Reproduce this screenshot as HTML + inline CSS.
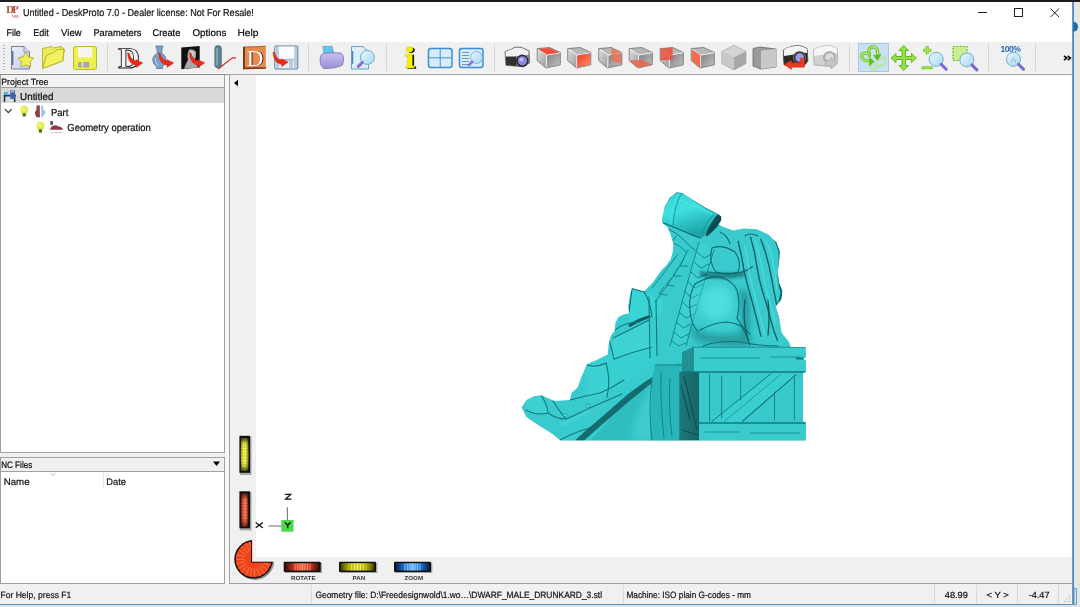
<!DOCTYPE html>
<html><head><meta charset="utf-8">
<style>
*{margin:0;padding:0;box-sizing:border-box}
html,body{width:1080px;height:607px;overflow:hidden;background:#f0f0f0;font-family:"Liberation Sans",sans-serif;color:#000;position:relative}
.a{position:absolute}
.t{position:absolute;white-space:pre}
svg{position:absolute;left:0;top:0;overflow:visible;will-change:transform}
</style></head><body>
<div class="a" style="left:0;top:0;width:1080px;height:2px;background:#1c1c1c"></div>
<div class="a" style="left:1074px;top:2px;width:6px;height:605px;background:#e6e8e6"></div>
<div class="a" style="left:1072px;top:2px;width:1px;height:605px;background:#6a9ac4"></div><div class="a" style="left:1073px;top:2px;width:1px;height:605px;background:#5a8ab4"></div>
<div class="a" style="left:0;top:2px;width:1072px;height:40px;background:#fff"></div>
<svg width="1080" height="607"><path d="M1073.5 21.7 A4.5 5 0 0 1 1073.5 31.7 Z" fill="#1a6ea6"/><rect x="1074" y="36" width="6" height="1" fill="#dcdcdc"/></svg>
<svg width="1080" height="607"><text x="6.2" y="12.6" font-family="Liberation Serif" font-size="10.5" font-weight="bold" fill="#b04a2c" letter-spacing="-1.6">DP</text><path d="M12 14.5 L13.5 17.3 M13.8 15.8 H18.5 M13.5 17 H18.8" stroke="#d06a60" stroke-width="0.8"/></svg>
<svg width="1080" height="607"><text x="22.89" y="16" font-family="Liberation Sans" font-size="10.17" textLength="231.02" lengthAdjust="spacingAndGlyphs" fill="#141414" stroke="#141414" stroke-width="0.22" text-rendering="geometricPrecision">Untitled - DeskProto 7.0 - Dealer license: Not For Resale!</text></svg>
<svg width="1080" height="607"><text x="6.52" y="36" font-family="Liberation Sans" font-size="9.74" textLength="14.27" lengthAdjust="spacingAndGlyphs" fill="#0c0c0c" stroke="#0c0c0c" stroke-width="0.22" text-rendering="geometricPrecision">File</text></svg>
<svg width="1080" height="607"><text x="33.17" y="36" font-family="Liberation Sans" font-size="9.74" textLength="15.57" lengthAdjust="spacingAndGlyphs" fill="#0c0c0c" stroke="#0c0c0c" stroke-width="0.22" text-rendering="geometricPrecision">Edit</text></svg>
<svg width="1080" height="607"><text x="61.12" y="36" font-family="Liberation Sans" font-size="9.74" textLength="20.47" lengthAdjust="spacingAndGlyphs" fill="#0c0c0c" stroke="#0c0c0c" stroke-width="0.22" text-rendering="geometricPrecision">View</text></svg>
<svg width="1080" height="607"><text x="93.42" y="36" font-family="Liberation Sans" font-size="9.74" textLength="47.97" lengthAdjust="spacingAndGlyphs" fill="#0c0c0c" stroke="#0c0c0c" stroke-width="0.22" text-rendering="geometricPrecision">Parameters</text></svg>
<svg width="1080" height="607"><text x="152.42" y="36" font-family="Liberation Sans" font-size="9.74" textLength="27.97" lengthAdjust="spacingAndGlyphs" fill="#0c0c0c" stroke="#0c0c0c" stroke-width="0.22" text-rendering="geometricPrecision">Create</text></svg>
<svg width="1080" height="607"><text x="192.42" y="36" font-family="Liberation Sans" font-size="9.74" textLength="33.97" lengthAdjust="spacingAndGlyphs" fill="#0c0c0c" stroke="#0c0c0c" stroke-width="0.22" text-rendering="geometricPrecision">Options</text></svg>
<svg width="1080" height="607"><text x="237.42" y="36" font-family="Liberation Sans" font-size="9.74" textLength="20.97" lengthAdjust="spacingAndGlyphs" fill="#0c0c0c" stroke="#0c0c0c" stroke-width="0.22" text-rendering="geometricPrecision">Help</text></svg>
<div class="a" style="left:0;top:42px;width:1072px;height:31px;background:#f0f0f0"></div>
<div class="a" style="left:0;top:73px;width:1072px;height:1px;background:#fbfbfb"></div>
<div class="a" style="left:0;top:74px;width:1072px;height:1px;background:#8e8c8a"></div>
<div class="a" style="left:0;top:75px;width:225px;height:378px;background:#fff;border-left:1px solid #a0a0a0;border-right:1px solid #a0a0a0;border-bottom:1px solid #a0a0a0"></div>
<div class="a" style="left:1px;top:75px;width:223px;height:12px;background:#f3f3f3"></div>
<div class="a" style="left:1px;top:87px;width:223px;height:1px;background:#a0a0a0"></div>
<div class="a" style="left:1px;top:88px;width:223px;height:15px;background:#d9d9d9"></div>
<div class="a" style="left:225px;top:75px;width:4px;height:509px;background:#f7f7f7"></div>
<svg width="1080" height="607"><text x="1.25" y="85" font-family="Liberation Sans" font-size="9.16" textLength="47.22" lengthAdjust="spacingAndGlyphs" fill="#0c0c0c" stroke="#0c0c0c" stroke-width="0.22" text-rendering="geometricPrecision">Project Tree</text></svg>
<svg width="1080" height="607"><text x="20.09" y="100" font-family="Liberation Sans" font-size="10.17" textLength="33.32" lengthAdjust="spacingAndGlyphs" fill="#0c0c0c" stroke="#0c0c0c" stroke-width="0.22" text-rendering="geometricPrecision">Untitled</text></svg>
<svg width="1080" height="607"><text x="50.99" y="116" font-family="Liberation Sans" font-size="10.17" textLength="17.32" lengthAdjust="spacingAndGlyphs" fill="#0c0c0c" stroke="#0c0c0c" stroke-width="0.22" text-rendering="geometricPrecision">Part</text></svg>
<svg width="1080" height="607"><text x="67.29" y="131" font-family="Liberation Sans" font-size="10.17" textLength="83.52" lengthAdjust="spacingAndGlyphs" fill="#0c0c0c" stroke="#0c0c0c" stroke-width="0.22" text-rendering="geometricPrecision">Geometry operation</text></svg>
<div class="a" style="left:0;top:457px;width:225px;height:127px;background:#fff;border:1px solid #a0a0a0"></div>
<div class="a" style="left:1px;top:458px;width:223px;height:13px;background:#f0f0f0"></div>
<div class="a" style="left:1px;top:471px;width:223px;height:1px;background:#a0a0a0"></div>
<svg width="1080" height="607"><text x="1.14" y="468" font-family="Liberation Sans" font-size="9.3" textLength="31.13" lengthAdjust="spacingAndGlyphs" fill="#0c0c0c" stroke="#0c0c0c" stroke-width="0.22" text-rendering="geometricPrecision">NC Files</text></svg>
<svg width="1080" height="607"><text x="3.72" y="485" font-family="Liberation Sans" font-size="9.59" textLength="25.86" lengthAdjust="spacingAndGlyphs" fill="#141414" stroke="#141414" stroke-width="0.22" text-rendering="geometricPrecision">Name</text></svg>
<svg width="1080" height="607"><text x="106.32" y="485" font-family="Liberation Sans" font-size="9.59" textLength="19.66" lengthAdjust="spacingAndGlyphs" fill="#141414" stroke="#141414" stroke-width="0.22" text-rendering="geometricPrecision">Date</text></svg>
<div class="a" style="left:103px;top:472px;width:1px;height:16px;background:#e6e6e6"></div>
<svg width="1080" height="607"><path d="M213 461.5 L220 461.5 L216.5 466 Z" fill="#000"/><path d="M50.5 473 L53 475.5 L55.5 473" fill="none" stroke="#aaa" stroke-width="0.8"/></svg>
<div class="a" style="left:229px;top:74px;width:843px;height:510px;background:#f0f0f0;border-left:1px solid #a0a0a0;border-top:1px solid #a0a0a0;border-bottom:1px solid #a0a0a0"></div>
<div class="a" style="left:256px;top:75px;width:816px;height:482px;background:#fff"></div>
<svg width="1080" height="607"><path d="M234 83 L238 79.8 L238 86.2 Z" fill="#000"/></svg>
<svg width="1080" height="607"><text x="0.46" y="598" font-family="Liberation Sans" font-size="9.01" textLength="70.90" lengthAdjust="spacingAndGlyphs" fill="#141414" stroke="#141414" stroke-width="0.22" text-rendering="geometricPrecision">For Help, press F1</text></svg>
<div class="a" style="left:311px;top:585px;width:1px;height:18px;background:#d8d8d8"></div>
<div class="a" style="left:623px;top:585px;width:1px;height:18px;background:#d8d8d8"></div>
<div class="a" style="left:934px;top:585px;width:1px;height:18px;background:#d8d8d8"></div>
<div class="a" style="left:976px;top:585px;width:1px;height:18px;background:#d8d8d8"></div>
<div class="a" style="left:1017px;top:585px;width:1px;height:18px;background:#d8d8d8"></div>
<div class="a" style="left:1058px;top:585px;width:1px;height:18px;background:#d8d8d8"></div>
<svg width="1080" height="607"><text x="315.45" y="598" font-family="Liberation Sans" font-size="9.16" textLength="286.62" lengthAdjust="spacingAndGlyphs" fill="#141414" stroke="#141414" stroke-width="0.22" text-rendering="geometricPrecision">Geometry file: D:\Freedesignwold\1.wo…\DWARF_MALE_DRUNKARD_3.stl</text></svg>
<svg width="1080" height="607"><text x="626.45" y="598" font-family="Liberation Sans" font-size="9.16" textLength="124.52" lengthAdjust="spacingAndGlyphs" fill="#141414" stroke="#141414" stroke-width="0.22" text-rendering="geometricPrecision">Machine: ISO plain G-codes - mm</text></svg>
<svg width="1080" height="607"><text x="944.77" y="598" font-family="Liberation Sans" font-size="8.87" textLength="23.09" lengthAdjust="spacingAndGlyphs" fill="#141414" stroke="#141414" stroke-width="0.22" text-rendering="geometricPrecision">48.99</text></svg>
<svg width="1080" height="607"><text x="986.47" y="598" font-family="Liberation Sans" font-size="8.87" textLength="22.19" lengthAdjust="spacingAndGlyphs" fill="#141414" stroke="#141414" stroke-width="0.22" text-rendering="geometricPrecision">&lt; Y &gt;</text></svg>
<svg width="1080" height="607"><text x="1028.67" y="598" font-family="Liberation Sans" font-size="8.87" textLength="20.89" lengthAdjust="spacingAndGlyphs" fill="#141414" stroke="#141414" stroke-width="0.22" text-rendering="geometricPrecision">-4.47</text></svg>
<div class="a" style="left:0;top:604px;width:1072px;height:1px;background:#5b8fbd"></div>
<div class="a" style="left:0;top:605px;width:1080px;height:2px;background:#dde3e8"></div>
<svg width="1080" height="607"><rect x="1074" y="588.5" width="2.5" height="16" fill="#cfe4f0" stroke="#5a8cb8" stroke-width="0.8"/><g fill="#a8a8a8"><rect x="1069" y="596" width="1" height="1"/><rect x="1069" y="598.5" width="1" height="1"/><rect x="1069" y="601" width="1" height="1"/><rect x="1066.5" y="598.5" width="1" height="1"/><rect x="1066.5" y="601" width="1" height="1"/><rect x="1064" y="601" width="1" height="1"/></g></svg>
<svg width="1080" height="607"><g stroke="#222" stroke-width="1" fill="none"><path d="M978 12.5 H987"/><rect x="1014.5" y="8.5" width="8" height="8"/><path d="M1050.5 8.5 L1059 17 M1059 8.5 L1050.5 17"/></g></svg>
<svg width="1080" height="607">
<defs>
<linearGradient id="gy" x1="0" y1="0" x2="1" y2="1"><stop offset="0" stop-color="#f4f47a"/><stop offset="1" stop-color="#e6e632"/></linearGradient>
<linearGradient id="gdoc" x1="0" y1="0" x2="1" y2="1"><stop offset="0" stop-color="#eef2fb"/><stop offset="1" stop-color="#c2c8ee"/></linearGradient>
<linearGradient id="gcubeF" x1="0" y1="0" x2="1" y2="1"><stop offset="0" stop-color="#7c7c7c"/><stop offset="0.6" stop-color="#a8a8a8"/><stop offset="1" stop-color="#c4c4c4"/></linearGradient>
<linearGradient id="gcubeL" x1="0" y1="0" x2="1" y2="1"><stop offset="0" stop-color="#e0e0e0"/><stop offset="1" stop-color="#9a9a9a"/></linearGradient>
<linearGradient id="gred" x1="0" y1="0" x2="1" y2="1"><stop offset="0" stop-color="#f03a20"/><stop offset="1" stop-color="#f89070"/></linearGradient>
<linearGradient id="gmag" x1="0" y1="0" x2="1" y2="1"><stop offset="0" stop-color="#e8f8ff"/><stop offset="1" stop-color="#a8d8f0"/></linearGradient>
<linearGradient id="gcam" x1="0" y1="0" x2="0" y2="1"><stop offset="0" stop-color="#f4f4f4"/><stop offset="1" stop-color="#9a9a9a"/></linearGradient>
<linearGradient id="gprn" x1="0" y1="0" x2="0" y2="1"><stop offset="0" stop-color="#c8c0f0"/><stop offset="1" stop-color="#9a90d8"/></linearGradient>
<g id="arrowR"><path d="M0 0 L1.8 0.5 Q3 7 8.6 8.3 L8.3 6.8 L15.3 10.1 L8.6 14.7 L8.8 12.6 Q0.5 11.5 0 0 Z" fill="#ec2a1c" stroke="#c02010" stroke-width="0.4"/></g>
<g id="magnL"><circle cx="0" cy="0" r="7" fill="url(#gmag)" stroke="#6aaccc" stroke-width="1"/><path d="M-5 5 L-9 9" stroke="#8a70d0" stroke-width="3" stroke-linecap="round"/></g>
<g id="magn"><circle cx="0" cy="0" r="7" fill="url(#gmag)" stroke="#6aaccc" stroke-width="1"/><path d="M5 5 L10 10" stroke="#7a6ad0" stroke-width="3" stroke-linecap="round"/></g>
<g id="cube">
<path d="M0.2 1.1 L12.7 0 L23.3 5 L9.4 7.4 Z" fill="#b8b8b8"/>
<path d="M0.2 1.1 L9.4 7.4 L9 20.5 L0.2 13.1 Z" fill="url(#gcubeL)"/>
<path d="M9.4 7.4 L23.3 5 L23.3 17.3 L9 20.5 Z" fill="url(#gcubeF)"/>
<path d="M0.2 1.1 L12.7 0 L23.3 5 L23.3 17.3 L9 20.5 L0.2 13.1 Z" fill="none" stroke="#707070" stroke-width="0.8"/>
<path d="M1.5 2 L9.6 7.6 L23 5.3 M9.6 7.6 L9.2 20" fill="none" stroke="#f8f8f8" stroke-width="0.9"/>
</g>
</defs>
<!-- grip -->
<g fill="#b4b8c0"><rect x="3" y="45" width="2" height="1"/><rect x="3" y="48" width="2" height="1"/><rect x="3" y="51" width="2" height="1"/><rect x="3" y="54" width="2" height="1"/><rect x="3" y="57" width="2" height="1"/><rect x="3" y="60" width="2" height="1"/><rect x="3" y="63" width="2" height="1"/><rect x="3" y="66" width="2" height="1"/><rect x="3" y="69" width="2" height="1"/></g>
<!-- separators -->
<g fill="#d6d6d6"><rect x="107" y="44" width="1" height="27"/><rect x="308" y="44" width="1" height="27"/><rect x="386" y="44" width="1" height="27"/><rect x="494" y="44" width="1" height="27"/><rect x="849" y="44" width="1" height="27"/><rect x="988" y="44" width="1" height="27"/><rect x="1035" y="44" width="1" height="27"/></g>
<!-- 1 new doc + star -->
<path d="M11.5 46.5 H24 L29.5 52 V69 H11.5 Z" fill="url(#gdoc)" stroke="#7a8090" stroke-width="1"/>
<path d="M24 46.5 V52 H29.5" fill="#d8dcf0" stroke="#7a8090" stroke-width="0.8"/>
<rect x="12" y="51" width="1.5" height="14" fill="#6a7898"/>
<path d="M25.80 52.46 L28.50 56.85 L33.60 58.02 L30.17 61.89 L30.62 67.00 L25.80 65.01 L20.98 67.00 L21.43 61.89 L18.00 58.02 L23.10 56.85 Z" fill="#eef05a" stroke="#a8a838" stroke-width="0.9" stroke-linejoin="round"/>
<!-- 2 folder -->
<path d="M42.5 48.5 L51.8 46.5 L53.5 48 L61 46.5 L64.5 49.5 L62.7 61 L42.6 68.4 Z" fill="#eaea5a" stroke="#b0b030" stroke-width="0.9"/>
<path d="M42.6 68.4 L46.6 55.2 L54 52.5 L56.4 50 L64 48.8 L62.7 61 Z" fill="#f2f260" stroke="#b0b030" stroke-width="0.9"/>
<!-- 3 floppy -->
<rect x="73.5" y="46.5" width="23" height="23" rx="2" fill="#eef04a" stroke="#b8b840" stroke-width="1"/>
<rect x="78" y="47.2" width="14.2" height="10.3" fill="#f6f6ee"/>
<rect x="78.2" y="62" width="11" height="5.5" fill="#a8a0b8"/><rect x="81.5" y="62" width="2" height="5.5" fill="#e8e850"/>
<!-- 4 D + arrow -->
<text x="118.3" y="68" font-family="Liberation Serif" font-size="30" font-weight="bold" fill="#f4f4f4" stroke="#1a1a1a" stroke-width="0.9" text-rendering="geometricPrecision">D</text>
<use href="#arrowR" transform="translate(127.5,52.8)"/>
<!-- 5 vase + arrow -->
<path d="M155.8 46 H163 L162 49 Q161.5 52 162 53.5 Q166.5 56 166 60 Q165 65 162 67 L163 68.5 H156.3 L157 67 Q152.5 64 152.7 59 Q153.5 55 157.2 53.2 Q157.5 51 156.8 49 Z" fill="#7aa2c8" stroke="#4a6e90" stroke-width="0.7"/>
<path d="M155 58 Q156 64 158 66" stroke="#b8d4ec" stroke-width="1" fill="none"/>
<use href="#arrowR" transform="translate(158.5,52.8)"/>
<!-- 6 portrait -->
<path d="M181.3 47.6 L199.7 45.9 L199.7 67.6 L181.3 69.2 Z" fill="#101010"/>
<path d="M189 49.5 Q194 48.5 196 52 Q196.5 57 194.5 60 Q197 63 198 67.6 L184 68.8 Q186 63 188 60 Q186.5 55 189 49.5 Z" fill="#a8a8a8"/>
<path d="M190 51 Q193 50 194.5 53 Q194 57 192 58 Z" fill="#d0d0d0"/>
<use href="#arrowR" transform="translate(189.5,52.8)"/>
<!-- 7 tool -->
<rect x="214.8" y="45.5" width="6.6" height="22.5" rx="3.3" fill="#5a8494" stroke="#3c6070" stroke-width="0.6"/>
<rect x="216.2" y="48" width="1.5" height="17" fill="#8ab0c0"/>
<path d="M218 69 L232.5 57.8 H236" fill="none" stroke="#d02a20" stroke-width="1.2"/>
<!-- 8 orange D -->
<path d="M243 46.8 L265.8 45.8 L265.8 68.8 L243 69.3 Z" fill="#e88a50"/>
<path d="M243 46.8 L245 46.7 L245 67.5 L265.8 67.2 L265.8 68.8 L243 69.3 Z" fill="#7a3a18"/>
<path d="M244.5 47.2 L265.3 46.3" stroke="#a85a30" stroke-width="0.8"/>
<text x="247.8" y="65.6" font-family="Liberation Serif" font-size="23" fill="#3a1808" text-rendering="geometricPrecision">D</text>
<text x="246.8" y="65.6" font-family="Liberation Serif" font-size="23" fill="#fff" text-rendering="geometricPrecision">D</text>
<!-- 9 floppy blue + arrow -->
<rect x="274.8" y="46" width="23" height="23" rx="0.8" fill="#e8f0f8" stroke="#5a7898" stroke-width="1"/>
<rect x="276" y="47" width="3" height="21" fill="#b8cce0"/>
<rect x="294" y="47" width="3" height="21" fill="#b8cce0"/>
<rect x="278.8" y="46.6" width="15.4" height="11.4" fill="#fafcff"/>
<rect x="279" y="59" width="15" height="1.5" fill="#a8bcd4"/>
<rect x="289" y="60" width="4" height="8.5" fill="#b8cce0"/>
<use href="#arrowR" transform="translate(273,52)"/>
<!-- 10 printer -->
<path d="M322.8 46.5 L332 46.2 L334 53.5 L324 54.5 Z" fill="#60c8f0" stroke="#4a90b0" stroke-width="0.6"/>
<path d="M320.5 56 Q322 52.8 330 52.8 L341 53 Q344 55 343.6 60 L342.5 65 Q336 68.5 324 68.5 Q320 66 320.1 60 Z" fill="url(#gprn)" stroke="#7a70a8" stroke-width="0.8"/>
<!-- 11 print preview -->
<path d="M351.5 46.5 H363 L368.6 52 V69 H351.5 Z" fill="#ddf0fa" stroke="#5a9ac8" stroke-width="0.9"/>
<rect x="351.8" y="51" width="1.5" height="13" fill="#4a8ac0"/>
<use href="#magnL" transform="translate(367.4,57.4)"/>
<!-- 12 info -->
<g transform="translate(404.5,46.3)">
<path d="M4.5 0.5 Q8.5 0.5 8.5 3.2 Q8.5 6 4.8 6 Q1.5 6 1.5 3.2 Q1.5 0.5 4.5 0.5 Z M1 7.8 H7.8 V19.5 H9.8 V21.8 H1 V19.5 H2.8 V10 H1 Z" fill="#111" transform="translate(1.8,0.6)"/>
<path d="M4.5 0.5 Q8.5 0.5 8.5 3.2 Q8.5 6 4.8 6 Q1.5 6 1.5 3.2 Q1.5 0.5 4.5 0.5 Z M1 7.8 H7.8 V19.5 H9.8 V21.8 H1 V19.5 H2.8 V10 H1 Z" fill="#f2f200" stroke="#c8c800" stroke-width="0.4"/>
</g>
<!-- 13 grid -->
<rect x="428.5" y="48.5" width="23.5" height="19" rx="2.5" fill="#d8ecfa" stroke="#3a90d8" stroke-width="1.5"/>
<path d="M440.2 49 V67 M429 57.8 H451.5" stroke="#3a90d8" stroke-width="1"/>
<!-- 14 list + magn -->
<rect x="459.5" y="48.5" width="23.5" height="19" rx="2.5" fill="#d8ecfa" stroke="#3a90d8" stroke-width="1.5"/>
<path d="M462 52.5 H469 M462 55.5 H469 M462 58.5 H469 M462 61.5 H469 M462 64.5 H469" stroke="#4a80b0" stroke-width="0.8"/>
<use href="#magnL" transform="translate(476.5,57.5) scale(0.85)"/>
<!-- 15 camera -->
<path d="M505 51.5 L513.3 48.5 L513.8 47.3 L521.2 47.2 L529 50.8 L529.6 62.7 L523.7 66.8 L505.9 65.3 Z" fill="#303030" stroke="#555" stroke-width="0.6"/>
<path d="M505.3 51.5 L513.3 48.5 L513.8 47.5 L521.2 47.4 L528.8 51 L528.8 55 L520 57.5 L516 56.5 L505.5 56.8 Z" fill="#f2f2f2" stroke="#777" stroke-width="0.5"/>
<path d="M516 56.5 L520 57.5 L528.8 55 L529.3 62 L523.5 66.5 L516.5 66 Z" fill="#8a8a8a"/>
<circle cx="522.2" cy="60.8" r="6.2" fill="#2a2a34"/>
<circle cx="522.4" cy="60.8" r="4.6" fill="#8a88e0"/>
<circle cx="521.4" cy="59.6" r="1.8" fill="#c4c4f4"/>
<!-- cubes -->
<g transform="translate(537,47.5)"><use href="#cube"/><path d="M1 1.6 L12.7 0.6 L22.3 5.2 L9.6 7 Z" fill="#f05040"/></g>
<g transform="translate(567.5,47.5)"><use href="#cube"/><path d="M10 8 L22.8 5.8 L22.8 16.9 L9.7 19.8 Z" fill="url(#gred)"/></g>
<g transform="translate(598.5,47.5)"><use href="#cube"/><path d="M12.7 0.5 L23 5.3 L23 17 L12.7 12.5 Z" fill="#f07050" opacity="0.75"/></g>
<g transform="translate(629,47.5)"><use href="#cube"/><path d="M0.5 13 L12.7 12.2 L23 17 L9.2 20.2 Z" fill="#f06048" opacity="0.8"/></g>
<g transform="translate(660,47.5)"><use href="#cube"/><path d="M0.5 1.3 L12.7 0.3 L12.7 12.3 L0.5 13 Z" fill="#f04a30" opacity="0.8"/></g>
<g transform="translate(691,47.5)"><use href="#cube"/><path d="M0.6 1.8 L9.2 7.6 L8.9 20 L0.6 13 Z" fill="#f26a50"/></g>
<!-- iso cube -->
<path d="M734 45.5 L745.8 51.5 L745.8 63.5 L734 69.8 L722 63.5 L722 51.5 Z" fill="#c0c0c0" stroke="#888" stroke-width="0.8"/>
<path d="M722 51.5 L734 57.5 L745.8 51.5 L734 45.5 Z" fill="#d4d4d4"/>
<path d="M734 57.5 L745.8 51.5 L745.8 63.5 L734 69.8 Z" fill="#a8a8a8"/>
<path d="M722 51.5 L734 57.5 L734 69.8 L722 63.5 Z" fill="#c8c8c8"/>
<!-- cube 8 -->
<path d="M753 48.5 L760 47 L776 49 L776 67 L761 69 L753 66 Z" fill="#9a9a9a" stroke="#666" stroke-width="0.8"/>
<path d="M761 50.5 L776 49 L776 67 L761 69 Z" fill="#c8c8c8"/>
<!-- camera red arrow -->
<path d="M783.4 50 Q786 47.5 791.5 46.5 Q795 45.2 799 45.5 Q804 46.5 807.2 48.8 L807.9 61 Q806 65 802 66.5 L784 65 Q783 58 783.4 50 Z" fill="#2a2a2a" stroke="#444" stroke-width="0.6"/>
<path d="M783.8 50.2 Q786 47.8 791.5 46.8 Q795 45.5 799 45.8 Q804 46.8 807 49 L807 53 Q800 51.5 794 54.5 L784 56 Z" fill="#f4f4f4"/>
<circle cx="799.5" cy="57.5" r="6.2" fill="#3a3a44" stroke="#888" stroke-width="0.6"/>
<circle cx="799.7" cy="57.5" r="4.3" fill="#a09ce8"/>
<path d="M800.5 58 L804.5 58 L804.5 67.2 L791.5 67.2 L791.5 69.5 L784 64.6 L791.5 60.2 L791.5 62.8 L800.5 62.8 Z" fill="#ec3a1e" stroke="#b02010" stroke-width="0.4"/>
<!-- camera gray -->
<path d="M813.6 50 Q816 47.5 821.5 46.5 Q825 45.2 829 45.5 Q834 46.5 837.2 48.8 L837.8 61 Q836 65 832 66.5 L814.2 65 Q813.3 58 813.6 50 Z" fill="#d0d0d0" stroke="#9a9a9a" stroke-width="0.6"/>
<path d="M814 50.2 Q816 47.8 821.5 46.8 Q825 45.5 829 45.8 Q834 46.8 837 49 L837 53 Q830 51.5 824 54.5 L814.2 56 Z" fill="#f6f6f6"/>
<circle cx="829.5" cy="57.5" r="6" fill="#b4b4b4" stroke="#999" stroke-width="0.6"/>
<circle cx="829.7" cy="57.5" r="4.2" fill="#dcdcdc"/>
<path d="M826 60 L831 60 L831 57 L837.5 63.8 L831 69 L831 66 L825 66 Z" fill="#c4c4c4" stroke="#9a9a9a" stroke-width="0.5"/>
<!-- highlighted button -->
<rect x="858.5" y="43.5" width="30" height="28" fill="#c9e0f5" stroke="#a6c8e8" stroke-width="1"/>
<!-- rotate green -->
<g fill="none" stroke-linecap="round" stroke-linejoin="round">
<path d="M880 59 Q887 56 885.5 62 Q884 68 877 65.5 M875 63 Q877 70 873.5 70 Q870 69 870 64" stroke="#a0e060" stroke-width="2.4" opacity="0.6"/>
<path d="M880 59 Q887 56 885.5 62 Q884 68 877 65.5 M875 63 Q877 70 873.5 70 Q870 69 870 64" stroke="#d8f4c0" stroke-width="0.9" opacity="0.8"/>
<path d="M869.5 56 Q867 47 873 46.8 Q879 47 877.5 57" stroke="#6cc820" stroke-width="3.2"/>
<path d="M869.5 56 Q867 47 873 46.8 Q879 47 877.5 57" stroke="#c4f08c" stroke-width="1.1"/>
<path d="M871 61 Q862 61 861.8 56.5 Q862 51.5 869 54" stroke="#6cc820" stroke-width="3.2"/>
<path d="M871 61 Q862 61 861.8 56.5 Q862 51.5 869 54" stroke="#c4f08c" stroke-width="1.1"/>
</g>
<path d="M873.5 55.5 L881 54.5 L877.5 60.5 Z" fill="#58b818" stroke="#6cc820" stroke-width="0.8"/>
<path d="M869.5 57.5 L869.5 66 L874 61.5 Z" fill="#58b818" stroke="#6cc820" stroke-width="0.8"/>
<!-- pan -->
<path d="M903.7 45.5 L908.5 50.5 H905.5 V56.5 H911.5 V53.5 L916.4 58 L911.5 62.5 V59.5 H905.5 V65.5 H908.5 L903.7 70.5 L899 65.5 H902 V59.5 H896 V62.5 L891 58 L896 53.5 V56.5 H902 V50.5 H899 Z" fill="#98e048" stroke="#58b018" stroke-width="0.9"/>
<!-- zoom +/- -->
<path d="M927.2 46 V54.5 M923 50.2 H931.4" stroke="#78c828" stroke-width="3"/><path d="M927.2 46.8 V53.7 M923.8 50.2 H930.6" stroke="#a8ec60" stroke-width="1.2"/>
<path d="M923 67.7 H931.5" stroke="#78c828" stroke-width="3" stroke-linecap="round"/><path d="M923.5 67.7 H931" stroke="#a8ec60" stroke-width="1.1"/>
<use href="#magn" transform="translate(936.2,59.3)"/>
<!-- zoom window -->
<rect x="953" y="46.5" width="14" height="14" fill="#c8f090" stroke="#70b828" stroke-width="1.2" stroke-dasharray="2 1.3"/>
<use href="#magn" transform="translate(966.9,59.9)"/>
<!-- 100% -->
<text x="1000.4" y="52" font-family="Liberation Sans" font-size="8.6" font-weight="bold" fill="#2a68b8" letter-spacing="-0.5" text-rendering="geometricPrecision">100%</text>
<use href="#magn" transform="translate(1013.5,59.3)"/>
<text x="1010.3" y="62.5" font-family="Liberation Sans" font-size="9" fill="#90b8cc">A</text>
<!-- chevrons -->
<path d="M1064 56 L1066.8 58.1 L1064 60.2 M1067.7 56 L1070.5 58.1 L1067.7 60.2" fill="none" stroke="#111" stroke-width="1.6"/>
</svg>

<svg width="1080" height="607">
<defs>
<radialGradient id="bulb" cx="0.45" cy="0.4" r="0.6"><stop offset="0" stop-color="#f6fa70"/><stop offset="1" stop-color="#d4e040"/></radialGradient>
</defs>
<!-- Untitled icon -->
<rect x="3.8" y="94.7" width="12" height="1.8" fill="#1e3a6a"/>
<rect x="3.8" y="95" width="1.5" height="7" fill="#1e2a3a"/>
<rect x="13.9" y="95" width="1.5" height="7" fill="#1e2a3a"/>
<rect x="4" y="91.8" width="3.8" height="3" fill="#4ab0e8"/>
<rect x="10.3" y="90.3" width="4.8" height="8.5" fill="#3a64a8"/>
<rect x="11" y="90.5" width="3.5" height="2" fill="#90b8e0"/>
<!-- chevron -->
<path d="M5 109.2 L8.3 112.6 L11.6 109.2" fill="none" stroke="#333" stroke-width="1.2"/>
<!-- bulb 1 -->
<ellipse cx="24.2" cy="110" rx="3.8" ry="4.2" fill="url(#bulb)"/>
<rect x="22.6" y="113.3" width="3.2" height="3.3" rx="0.8" fill="#5a6a20"/>
<!-- part icon -->
<path d="M36.5 105.5 L39.8 105.5 L40 117.3 L36.8 117.3 Q34.6 115 35 112 Q35.8 111 36.5 110 Z" fill="#8a3a3a"/>
<path d="M37.2 106 L39 106 L39 116" stroke="#c07070" stroke-width="0.6" fill="none"/>
<path d="M41.2 105.5 L43 105.5 L43 109 Q45.8 111 45.6 113 L42.5 117.3 L41.2 117.3 Z" fill="#a8c4dc"/>
<!-- bulb 2 -->
<ellipse cx="40.4" cy="126" rx="3.8" ry="4.2" fill="url(#bulb)"/>
<rect x="38.8" y="129.3" width="3.2" height="3.4" rx="0.8" fill="#5a6a20"/>
<!-- geometry op icon -->
<rect x="50.3" y="121" width="2.7" height="3.9" rx="0.6" fill="#555"/>
<path d="M50 129.7 Q50.5 126.5 53.5 125.5 Q56 124.6 58 126.3 Q61.5 126.8 62.6 128.5 L62.6 129.7 Z" fill="#8a3a48"/>
<path d="M51 132.5 H53 M54.5 132.5 H58 M59 132.5 H62" stroke="#bbb" stroke-width="1"/>
</svg>

<svg width="1080" height="607">
<defs>
<linearGradient id="mugg" x1="0" y1="0" x2="0.35" y2="1">
<stop offset="0" stop-color="#36d2d4"/><stop offset="0.45" stop-color="#3ee0e0"/><stop offset="1" stop-color="#1aa2a6"/>
</linearGradient>
<linearGradient id="crateL" x1="0" y1="0" x2="1" y2="0"><stop offset="0" stop-color="#1e7a7c"/><stop offset="1" stop-color="#176466"/></linearGradient>
<clipPath id="silclip"><path d="M521.6 407.6 L526.4 400 L534 396.3 L541.5 395.3 L548.1 398.2 L554.8 401 L569.9 400 L571.8 392.5 L577.5 387.8 L581.3 377.3 L587 364 L596.4 360.3 L607.8 354.6 L608.6 345 L611 335.4 L614.8 330.5 L615.4 323.1 L618.5 316.9 L623.4 314.4 L629 313.2 L628.3 305.8 L630.2 294.7 L632 287.9 L644.4 291.6 L646.9 288.5 L653 282.3 L658 274.9 L661.7 270 L666.5 265.3 L671.1 258.4 L672.8 251.5 L673.4 243.4 L670 233 L667.6 227.3 L663 223.8 L661.9 220.4 L662 218.6 L664.8 206.8 L669.8 197.9 L676.7 192.4 L681.7 192.9 L689.6 197.9 L705.4 207.8 L717.3 213.7 L721.2 216.6 L721.2 220.6 L718.5 224.5 L722.4 226.6 L732.9 230.5 L743.5 228.6 L756.7 229.2 L768.5 234.5 L776.4 242.4 L779.7 251.6 L779 262.2 L777.7 272.7 L779 283.2 L782.4 290 L781.7 298.9 L775.7 306.3 L779.4 319.6 L781.7 333 L789.1 341.9 L790.6 347 L805.6 347 L806 357 L803 358.5 L806 361 L806 372 L803 373 L803 421 L806 423 L806 440.5 L560.5 440.5 L552.9 434.2 L537.7 424.7 L526.4 417.1 Z"/></clipPath>
<filter id="blur1" x="-20%" y="-20%" width="140%" height="140%"><feGaussianBlur stdDeviation="1.5"/></filter>
<filter id="blur2" x="-20%" y="-20%" width="140%" height="140%"><feGaussianBlur stdDeviation="3"/></filter>
</defs>
<!-- silhouette -->
<path fill="#38cacc" d="M521.6 407.6 L526.4 400 L534 396.3 L541.5 395.3 L548.1 398.2 L554.8 401 L569.9 400 L571.8 392.5 L577.5 387.8 L581.3 377.3 L587 364 L596.4 360.3 L607.8 354.6 L608.6 345 L611 335.4 L614.8 330.5 L615.4 323.1 L618.5 316.9 L623.4 314.4 L629 313.2 L628.3 305.8 L630.2 294.7 L632 287.9 L644.4 291.6 L646.9 288.5 L653 282.3 L658 274.9 L661.7 270 L666.5 265.3 L671.1 258.4 L672.8 251.5 L673.4 243.4 L670 233 L667.6 227.3 L663 223.8 L661.9 220.4 L662 218.6 L664.8 206.8 L669.8 197.9 L676.7 192.4 L681.7 192.9 L689.6 197.9 L705.4 207.8 L717.3 213.7 L721.2 216.6 L721.2 220.6 L718.5 224.5 L722.4 226.6 L732.9 230.5 L743.5 228.6 L756.7 229.2 L768.5 234.5 L776.4 242.4 L779.7 251.6 L779 262.2 L777.7 272.7 L779 283.2 L782.4 290 L781.7 298.9 L775.7 306.3 L779.4 319.6 L781.7 333 L789.1 341.9 L790.6 347 L805.6 347 L806 357 L803 358.5 L806 361 L806 372 L803 373 L803 421 L806 423 L806 440.5 L560.5 440.5 L552.9 434.2 L537.7 424.7 L526.4 417.1 Z"/>
<g clip-path="url(#silclip)">
<!-- broad shading regions -->
<path fill="#25b0b2" d="M590 440.5 L605 425 L625 400 L645 384 L660 372 L679 362 L679 440.5 Z" opacity="0.45"/>
<path fill="#3ad6d6" d="M632 288 L644.4 291.6 L656 297.9 L662.7 298.6 L662.7 309.7 L659 317.2 L639.7 318.6 L630 322 L628.3 305.8 L630.2 294.7 Z" opacity="0.8"/>
<path fill="#38d2d4" d="M590 363 Q605 355 620 350 Q640 345 655 343 L660 360 Q640 372 622 385 Q605 395 590 398 Z" opacity="0.6"/>
<!-- mug -->
<path fill="url(#mugg)" d="M662 218.6 L664.8 206.8 L669.8 197.9 L676.7 192.4 L681.7 192.9 L689.6 197.9 L705.4 207.8 L717.3 213.7 L721.2 216.6 L721.2 220.6 L718.2 224.6 L709.3 229.5 L705.4 234.5 L701.4 238.4 L693.5 236.4 L672.7 226.5 L662.9 223.6 Z"/>
<path fill="none" stroke="#0e6a6e" stroke-width="1.1" d="M664.5 207 Q668 197 676.7 192.4 Q682 192 690 197.5 L705.4 207.8 L718.5 214"/>
<path fill="none" stroke="#1c9ca0" stroke-width="1" d="M681 194.5 Q674 206 673 226"/>
<path fill="none" stroke="#4ae4e4" stroke-width="1" d="M678.5 194 Q671 206 670.5 224.5"/>
<path fill="none" stroke="#1a9498" stroke-width="0.9" d="M713.5 214.8 Q706 222 702.4 233.3"/>
<path fill="#0a4e52" d="M718.7 213.5 Q722 215 721.5 219 Q719 226 712 232 Q708 236 705.5 236.5 Q707 229 712 222 Q715.5 216 718.7 213.5 Z"/>
<path fill="none" stroke="#0f6a6e" stroke-width="1.2" d="M662.5 222.5 Q680 230 700 238"/>
<!-- hand under mug -->
<g fill="none" stroke="#138084" stroke-width="1" stroke-linecap="round">
<path d="M668 229 Q676 232 684 240 Q690 247 695 250"/>
<path d="M672 243 Q680 245 686 252"/>
<path d="M676 236 Q668 246 671 258"/>
</g>
<!-- braids (chevrons) -->
<path fill="#44d6d8" d="M700 242 Q712 244 716 252 Q704 290 686 346 L670 346 Q684 290 700 242 Z" opacity="0.45"/>
<g fill="none" stroke="#118084" stroke-width="0.9" stroke-linecap="round">
<path d="M699 242 Q688 280 670 346"/>
<path d="M714 250 Q700 295 686 346"/>
<path d="M697 252 L704 258 L712 254 M694 262 L701 268 L709 264 M691 272 L698 278 L706 274 M688 282 L695 288 L703 284 M685 292 L692 298 L700 294 M682 302 L689 308 L697 304 M679 312 L686 318 L694 314 M676.5 322 L683.5 328 L691 324 M674 332 L681 338 L688.5 334 M672 341 L678.5 346 L686 343"/>
<path d="M688 250 Q676 275 655 302"/>
<path d="M678 254 Q665 272 652 288"/>
<path d="M684 258 L680 266 L688 266 M678 268 L673 276 L681 276 M671 278 L666 285 L674 286 M664 287 L659 294 L667 295"/>
</g>
<!-- axe head edges -->
<g fill="none" stroke="#0e6a6e" stroke-width="1.1" stroke-linecap="round">
<path d="M631 288.5 L645 292"/>
<path d="M644 292 Q650 300 652 317"/>
<path d="M629.6 324.3 Q640 318 649.3 315.7"/>
<path d="M632 289 L629 312"/>
</g>
<path fill="#0c5c60" d="M628 325.5 Q640 318 650 315 L651 317.5 Q640 321 630 327 Z"/>
<!-- leg/boot -->
<path fill="#44d8d8" d="M613 338 Q630 330 649 320 L652 347 Q632 352 614 359 Z" opacity="0.55"/>
<path fill="#44d8d8" d="M585 366 Q596 362 606 362 Q610 378 606 396 Q596 402 585 402 Z" opacity="0.4"/>
<path fill="#44d8d8" d="M526 402 Q534 396 541 396 Q548 402 548 413 Q538 414 528 412 Z" opacity="0.5"/>
<g fill="none" stroke="#12787c" stroke-width="1.1" stroke-linecap="round">
<path d="M541.5 396 Q547 404 548 413 Q556 419 566 419"/>
<path d="M548 413 Q536 416 526 410"/>
<path d="M553 401 Q560 412 565 418"/>
<path d="M566 419 Q580 413 592 407 Q608 400 622 394"/>
<path d="M570 400 Q585 396 600 393 Q612 388 624 380"/>
<path d="M587 365 Q595 368 606 363"/>
<path d="M606 363 Q611 380 607 397"/>
<path d="M613 338 Q630 330 649 320"/>
<path d="M614 359 Q632 352 652 347"/>
<path d="M649 297 L650 358"/>
<path d="M656 300 L657 356"/>
<path d="M609 340 Q612 350 614 359"/>
<path d="M615 330 Q625 322 640 322"/>
<path d="M560 440 Q575 432 590 428"/>
</g>
<circle cx="565.2" cy="415.2" r="1.7" fill="#56e6e6" stroke="#148086" stroke-width="0.6"/>
<circle cx="587.9" cy="405.8" r="1.7" fill="#56e6e6" stroke="#148086" stroke-width="0.6"/>
<path fill="#0f6266" d="M575 440.5 Q586 430 596 422 Q612 408 628 394 Q645 381 662 371 Q670 367 678 364 L679 368 Q664 374 648 386 Q630 400 612 416 Q598 428 584 440.5 Z" opacity="0.9"/>
<!-- head / torso -->
<path fill="#44d8d8" d="M692 290 Q700 278 718 278 Q735 282 738 300 Q740 322 728 334 Q710 340 696 332 Q688 318 692 290 Z" opacity="0.35"/>
<g fill="none" stroke="#0f6c70" stroke-width="1.1" stroke-linecap="round">
<path d="M712 248 Q722 244 735 252 Q742 262 738 272 Q728 276 716 272 Q708 262 712 248 Z"/>
<path d="M720 232 Q728 236 730 244"/>
<path d="M708 272 Q720 274 738 273 Q748 271 752.4 266.5"/>
<path d="M695 284 Q708 276 720 277 Q732 280 737 290 Q741 305 737 318"/>
<path d="M695 284 Q688 296 690 310 Q691 324 698 332"/>
<path d="M700 330 Q715 322 728 322 Q742 324 750 334"/>
<path d="M737 318 Q745 330 750 345"/>
<path d="M703 346 Q720 340 740 342 Q760 346 778 346"/>
<path d="M745 236 Q750 232 758 236"/>
</g>
<!-- soft shading -->
<g filter="url(#blur2)">
<path d="M700 300 Q706 286 720 286 Q732 290 732 305 Q730 318 716 320 Q702 318 700 300 Z" fill="#5ae8e8" opacity="0.6"/>
<path d="M740 290 Q744 310 742 335 L748 338 Q750 310 746 290 Z" fill="#0c6064" opacity="0.6"/>
<path d="M690 325 Q705 336 730 334 Q745 332 752 340 L750 346 Q720 348 695 340 Z" fill="#107074" opacity="0.5"/>
<path d="M655 380 Q640 400 630 440 L665 440 Q660 410 670 380 Z" fill="#5ae0e0" opacity="0.4"/>
</g>
<g filter="url(#blur1)">
<path d="M700 271 Q720 276 745 272 L745 276 Q720 281 700 276 Z" fill="#0a5a5e" opacity="0.7"/>
<path d="M560 425 Q575 420 590 410" stroke="#5ae8e8" stroke-width="2" fill="none" opacity="0.6"/>
</g>
<!-- hair strands -->
<g fill="none" stroke="#0b5c60" stroke-width="1.3" stroke-linecap="round">
<path d="M750.6 237.4 Q755 252 756.8 266.2 Q759 280 763 293 Q768 308 771.2 321.8 Q774 332 777.4 340.3"/>
<path d="M760.9 239.4 Q766 252 769.1 266.2 Q772 280 774.3 293 Q777 306 779.4 317.6"/>
<path d="M738.2 241.5 Q742 257 744.4 272.4 Q748 288 752.6 303.2 Q757 320 760.9 336.2"/>
<path d="M771.2 233.2 Q777 242 779.4 251.8 Q780 264 778.4 276.5 Q779 286 781.5 293 Q780 300 777.4 307.4 Q779 316 781.5 323.8" stroke-width="1.6"/>
<path d="M745 300 Q742 318 748 340"/>
<path d="M768 300 Q770 318 768 335"/>
</g>
<g fill="none" stroke="#52e2e2" stroke-width="1.3" stroke-linecap="round" opacity="0.75">
<path d="M755 240 Q760 254 762 268 Q765 284 768 296 Q772 310 775 322"/>
<path d="M745 246 Q748 262 750 276 Q753 290 757 305 Q761 320 765 335"/>
<path d="M766 240 Q772 254 774 268 Q776 280 777 290"/>
<path d="M680 200 Q692 205 712 214" stroke-width="1.8"/>
</g>
<!-- back crate -->
<path fill="#28b6b8" d="M655 365 L682 364 L682 440.5 L650 440.5 L652 380 Z"/>
<g fill="none" stroke="#167e82" stroke-width="0.9">
<path d="M655 365 H682"/><path d="M661 372 Q660 400 664 438"/><path d="M670 378 Q668 405 672 436"/><path d="M652 380 Q648 410 652 440"/>
</g>
<!-- crate dark side -->
<path fill="#1e8286" d="M682 352 L693.2 347 L693.2 372 L682 372 Z" opacity="0.8"/>
<path fill="url(#crateL)" d="M679.3 372 L699.2 372 L699.2 440.5 L679.3 440.5 Z"/>
<g fill="none" stroke="#0b4a4c" stroke-width="1">
<path d="M681 385 L690 420 M684 376 L697 430 M682 430 L698 435"/>
</g>
<!-- crate front -->
<rect x="693.2" y="346.9" width="112.4" height="25.1" fill="#3acccd"/>
<rect x="699.2" y="372" width="104" height="51" fill="#38c9cb"/>
<rect x="699.2" y="422.2" width="106.4" height="18.3" fill="#3acccd"/>
<path fill="#38d4d6" d="M712.2 421.3 L771 373.7 L796.1 374.6 L742.5 421.3 Z" opacity="0.6"/>
<g fill="none" stroke="#137a7e" stroke-linecap="round">
<path d="M682 372 H805.6" stroke-width="1.6"/>
<path d="M699.2 423 H805.6" stroke-width="1.4"/>
<path d="M693.2 347.2 H805.6" stroke-width="0.8"/>
<path d="M709.6 374 V421" stroke-width="0.9"/>
<path d="M721.7 376 V418" stroke-width="0.9"/>
<path d="M740.7 376 V400" stroke-width="0.9"/>
<path d="M774.5 392 V420" stroke-width="0.9"/>
<path d="M794.4 378 V420" stroke-width="0.9"/>
<path d="M712.2 421.3 L771 373.7" stroke-width="1"/>
<path d="M742.5 421.3 L796.1 374.6" stroke-width="1.2"/>
<path d="M725 421 L780 375" stroke-width="0.6"/>
<path d="M700 358 H760 M770 357 H800" stroke-width="0.7"/>
<path d="M796.5 358.5 H806" stroke-width="2"/>
<path d="M705 432 H740 M750 433 H800" stroke-width="0.7"/>
<path d="M693.2 347 V372" stroke-width="0.9"/>
</g>
</g>
</svg>

<svg width="1080" height="607">
<defs>
<linearGradient id="yw" x1="0" y1="0" x2="1" y2="0"><stop offset="0" stop-color="#909000"/><stop offset="0.3" stop-color="#f4f430"/><stop offset="0.6" stop-color="#fafa70"/><stop offset="1" stop-color="#707000"/></linearGradient>
<linearGradient id="rw" x1="0" y1="0" x2="1" y2="0"><stop offset="0" stop-color="#601808"/><stop offset="0.35" stop-color="#e84a28"/><stop offset="0.6" stop-color="#f06a48"/><stop offset="1" stop-color="#501008"/></linearGradient>
<linearGradient id="rbar" x1="0" y1="0" x2="1" y2="0"><stop offset="0" stop-color="#401008"/><stop offset="0.3" stop-color="#d84020"/><stop offset="0.5" stop-color="#f06848"/><stop offset="0.7" stop-color="#d84020"/><stop offset="1" stop-color="#401008"/></linearGradient>
<linearGradient id="ybar" x1="0" y1="0" x2="1" y2="0"><stop offset="0" stop-color="#404000"/><stop offset="0.3" stop-color="#e0e020"/><stop offset="0.5" stop-color="#f8f870"/><stop offset="0.7" stop-color="#e0e020"/><stop offset="1" stop-color="#404000"/></linearGradient>
<linearGradient id="bbar" x1="0" y1="0" x2="1" y2="0"><stop offset="0" stop-color="#082050"/><stop offset="0.3" stop-color="#2a80e0"/><stop offset="0.5" stop-color="#70b8f8"/><stop offset="0.7" stop-color="#2a80e0"/><stop offset="1" stop-color="#082050"/></linearGradient>
<linearGradient id="wv" x1="0" y1="0" x2="0" y2="1"><stop offset="0" stop-color="#000" stop-opacity="0.7"/><stop offset="0.15" stop-color="#000" stop-opacity="0.1"/><stop offset="0.3" stop-color="#000" stop-opacity="0"/><stop offset="0.7" stop-color="#000" stop-opacity="0"/><stop offset="0.85" stop-color="#000" stop-opacity="0.15"/><stop offset="1" stop-color="#000" stop-opacity="0.7"/></linearGradient>
<clipPath id="dialclip"><path d="M220 530 H251.6 V562.2 H290 V600 H220 Z"/></clipPath>
</defs>
<!-- yellow wheel -->
<rect x="240" y="436.5" width="11.5" height="38.5" fill="#a8a8a8"/>
<rect x="239.4" y="435.8" width="10.7" height="37" fill="#111"/>
<path d="M241.3 438.3 Q240 454.5 241.3 471 H248 Q249.4 454.5 248 438.3 Z" fill="url(#yw)"/>
<g stroke="#a0a000" stroke-width="0.5"><path d="M241.5 441 H248 M241 444 H248.5 M241 447 H248.5 M241 450 H248.5 M241 453 H248.5 M241 456 H248.5 M241 459 H248.5 M241 462 H248.5 M241 465 H248.5 M241.5 468 H248"/></g>
<path d="M241.3 438.3 Q240 454.5 241.3 471 H248 Q249.4 454.5 248 438.3 Z" fill="url(#wv)"/>
<!-- red wheel -->
<rect x="240" y="492" width="11.5" height="38.5" fill="#a8a8a8"/>
<rect x="239.4" y="491.3" width="10.7" height="37" fill="#111"/>
<path d="M241.3 493.8 Q240 510 241.3 526.5 H248 Q249.4 510 248 493.8 Z" fill="url(#rw)"/>
<g stroke="#f8b098" stroke-width="0.5"><path d="M242 500 H247.5 M242 503 H247.5 M242 506 H247.5 M242 509 H247.5 M242 512 H247.5 M242 515 H247.5 M242 518 H247.5"/></g>
<path d="M241.3 493.8 Q240 510 241.3 526.5 H248 Q249.4 510 248 493.8 Z" fill="url(#wv)" opacity="0.8"/>
<!-- dial -->
<g clip-path="url(#dialclip)">
<circle cx="255" cy="560.7" r="19.3" fill="#909090"/>
<circle cx="253.6" cy="559.3" r="19.3" fill="#1a0a08"/>
<circle cx="253.6" cy="559.3" r="17.8" fill="#f04418"/>
<g stroke="#f88a60" stroke-width="0.7">
<path d="M253.6 559.3 L236 559.3 M253.6 559.3 L236.6 554.5 M253.6 559.3 L238.5 550 M253.6 559.3 L241.5 546 M253.6 559.3 L245.5 543 M253.6 559.3 L249.5 541.5 M253.6 559.3 L236.6 564 M253.6 559.3 L238.5 568.5 M253.6 559.3 L241.5 572.5 M253.6 559.3 L245.5 575.5 M253.6 559.3 L250 577 M253.6 559.3 L255 577 M253.6 559.3 L260 576.3 M253.6 559.3 L264.5 573.5 M253.6 559.3 L268 570 M253.6 559.3 L270.5 565.5"/>
</g>
<circle cx="253.6" cy="559.3" r="9" fill="#f04418"/>
</g>
<path d="M251.6 540 V562.2 H273" fill="none" stroke="#2a0a08" stroke-width="1"/>
<!-- bars -->
<g>
<rect x="285" y="562.7" width="37" height="10.3" fill="#a0a0a0"/>
<rect x="283.7" y="561.7" width="37" height="10.3" rx="1" fill="#111"/>
<rect x="285.5" y="563.2" width="33.4" height="7.3" fill="url(#rbar)"/>
<g stroke="#f8b8a0" stroke-width="0.6"><path d="M295 563.5 V570.5 M297.5 563.5 V570.5 M300 563.5 V570.5 M302.5 563.5 V570.5 M305 563.5 V570.5 M307.5 563.5 V570.5 M310 563.5 V570.5"/></g>
</g>
<g>
<rect x="340.3" y="562.7" width="37" height="10.3" fill="#a0a0a0"/>
<rect x="339" y="561.7" width="37" height="10.3" rx="1" fill="#111"/>
<rect x="340.8" y="563.2" width="33.4" height="7.3" fill="url(#ybar)"/>
<g stroke="#707000" stroke-width="0.6"><path d="M347 563.5 V570.5 M350 563.5 V570.5 M353 563.5 V570.5 M356 563.5 V570.5 M359 563.5 V570.5 M362 563.5 V570.5 M365 563.5 V570.5 M368 563.5 V570.5"/></g>
</g>
<g>
<rect x="395.3" y="562.7" width="37" height="10.3" fill="#a0a0a0"/>
<rect x="394" y="561.7" width="37" height="10.3" rx="1" fill="#111"/>
<rect x="395.8" y="563.2" width="33.4" height="7.3" fill="url(#bbar)"/>
<g stroke="#b0d8ff" stroke-width="0.6"><path d="M405 563.5 V570.5 M407.5 563.5 V570.5 M410 563.5 V570.5 M412.5 563.5 V570.5 M415 563.5 V570.5 M417.5 563.5 V570.5 M420 563.5 V570.5"/></g>
</g>
<g font-family="Liberation Sans" font-size="6.2" font-weight="bold" fill="#333">
<text x="291" y="580">ROTATE</text>
<text x="352.5" y="580">PAN</text>
<text x="404.5" y="580">ZOOM</text>
</g>
<!-- axes -->
<path d="M287.4 507.2 V520" stroke="#808080" stroke-width="1.2"/>
<path d="M268.6 526 H281.3" stroke="#808080" stroke-width="1.2"/>
<rect x="281.3" y="520" width="12.2" height="11.7" fill="#4cd84c"/>
<g fill="none" stroke="#111" stroke-width="1.3" stroke-linecap="square">
<path d="M285.6 494.4 H290.6 L285.6 499.2 H290.8"/>
<path d="M256.3 522.9 L262.3 527.4 M262.3 522.9 L256.3 527.4"/>
<path d="M285.3 522.8 L287.7 525.3 L290.1 522.8 M287.7 525.3 V527.6"/>
</g>
</svg>

</body></html>
